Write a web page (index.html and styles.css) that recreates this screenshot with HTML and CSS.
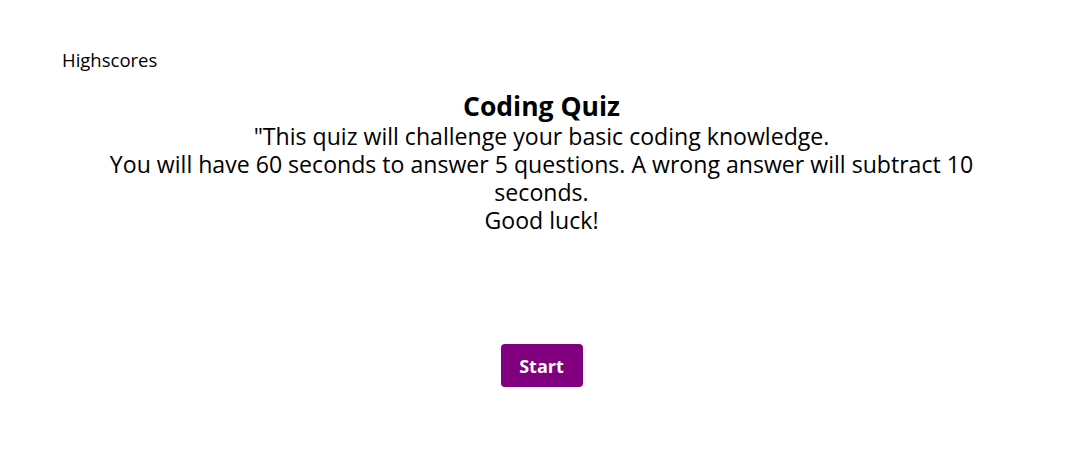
FILE: index.html
```html
<!DOCTYPE html>
<html>
<head>
<meta charset="utf-8">
<link rel="stylesheet" href="styles.css">
</head>
<body>
<header class="top">
  <a class="highscores">Highscores</a>
</header>
<main class="intro">
  <h1 class="title">Coding Quiz</h1>
  <p class="desc">"This quiz will challenge your basic coding knowledge.<br>You will have 60 seconds to answer 5 questions. A wrong answer will subtract 10 seconds.<br>Good luck!</p>
  <div class="actions">
    <button class="start">Start</button>
  </div>
</main>
</body>
</html>
```
FILE: styles.css
```css
html, body {
  margin: 0;
  padding: 0;
  background: #fff;
  color: #000;
  font-family: "Open Sans", sans-serif;
}
.top {
  padding: 47px 0 0 62px;
  height: 29px;
}
.highscores {
  font-size: 18.5px;
}
.intro {
  width: 900px;
  margin: 0 auto;
  padding-right: 7px;
  text-align: center;
}
.title {
  font-size: 26.5px;
  font-weight: bold;
  margin: 14px 0 0;
  line-height: 32px;
}
.desc {
  font-size: 23.1px;
  line-height: 28px;
  margin: 0;
}
.actions {
  padding-top: 110px;
}
.start {
  background: #800080;
  color: #fff;
  border: none;
  border-radius: 4px;
  width: 82px;
  height: 43px;
  font-family: inherit;
  font-size: 18px;
  font-weight: bold;
}
```
